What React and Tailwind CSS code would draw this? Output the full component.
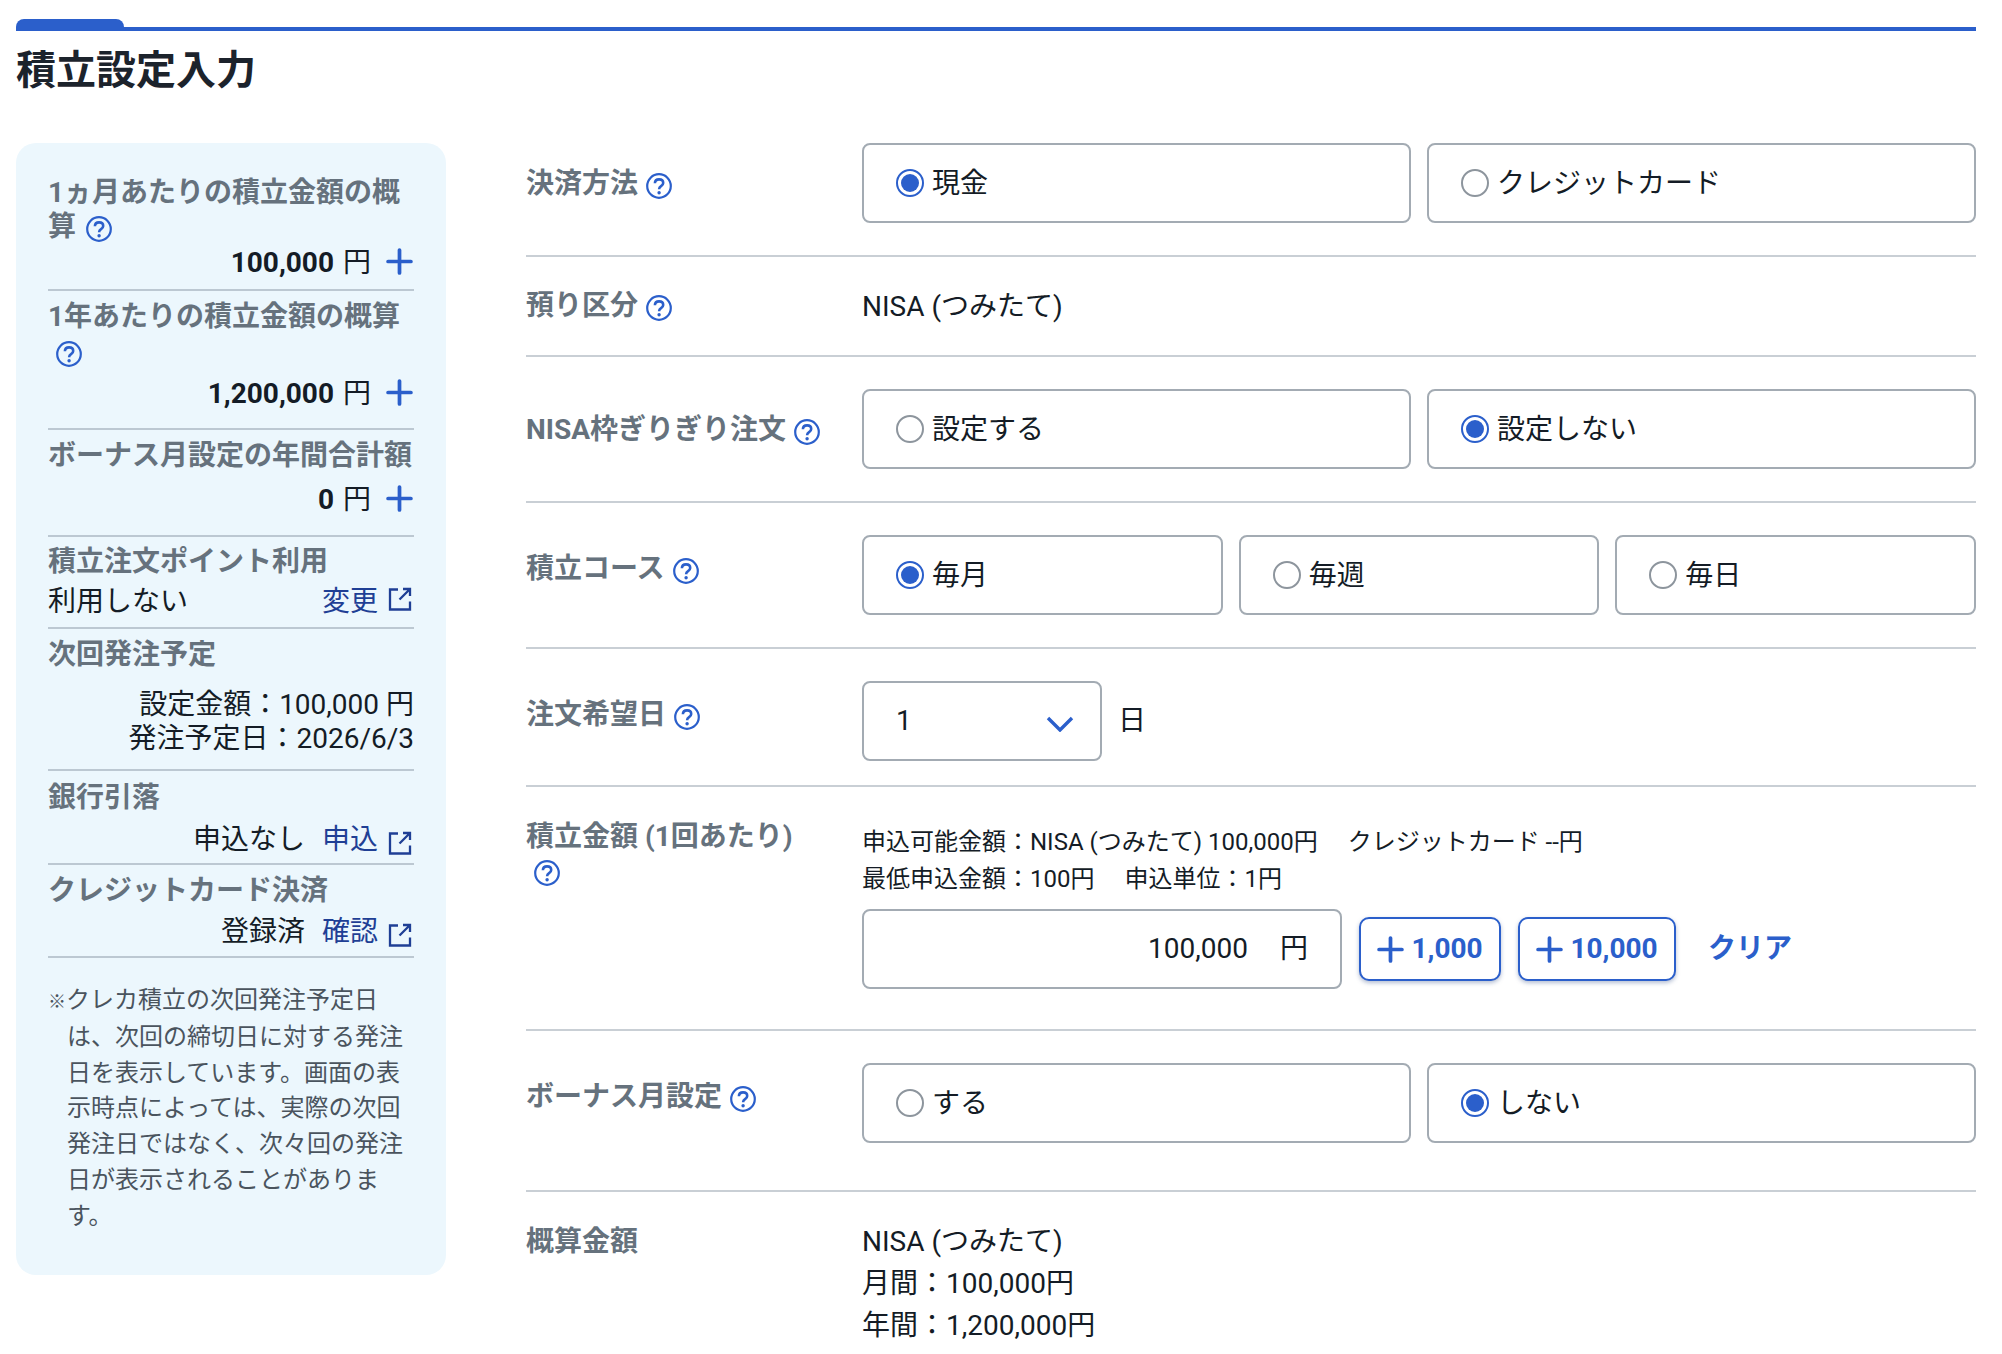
const FONT = "font-['Roboto','Noto_Sans_CJK_JP',sans-serif]";

function Help({ className = '' }) {
  return (
    <svg viewBox="0 0 26 26" className={`inline-block w-[26px] h-[26px] shrink-0 ${className}`} fill="none" stroke="#2b5fcb">
      <circle cx="13" cy="13" r="11.8" strokeWidth="2.2" />
      <path d="M8.9 10.3c0-2.5 1.8-3.9 4.2-3.9 2.4 0 4.1 1.4 4.1 3.5 0 1.6-.9 2.4-2.1 3.2-1.2.8-1.9 1.4-1.9 2.7v.5" strokeWidth="2.6" />
      <circle cx="13.1" cy="19.8" r="1.7" fill="#2b5fcb" stroke="none" />
    </svg>
  );
}

function ExternalLink({ className = '' }) {
  return (
    <svg viewBox="0 0 24 24" className={`w-[24px] h-[24px] shrink-0 ${className}`} fill="none" stroke="#1f3f95" strokeWidth="2.3">
      <path d="M10 2.5H2v20h20v-8M11.5 12.5 22 2M15 2h7v7" />
    </svg>
  );
}

function PlusIcon({ className = '' }) {
  return (
    <svg viewBox="0 0 26 26" className={`w-[27px] h-[27px] shrink-0 ${className}`} stroke="#2b5fcb" strokeWidth="3.6" strokeLinecap="round">
      <path d="M13 2v22M2 13h22" />
    </svg>
  );
}

function SummaryTitle({ children, className = '' }) {
  return <div className={`font-bold text-[#66727d] ${className}`}>{children}</div>;
}

function Amount({ value }) {
  return (
    <div className="flex items-center justify-end pr-[1px]">
      <span className="font-bold text-[#141c26]">{value}</span>
      <span className="ml-[9px]">円</span>
      <PlusIcon className="ml-[15px] -mt-[3px]" />
    </div>
  );
}

function LinkRow({ text, link, between, iconClass = '' }) {
  return (
    <div className={`flex items-center ${between ? 'justify-between' : 'justify-end'}`}>
      <span className={between ? '' : 'mr-[17px]'}>{text}</span>
      <span className="flex items-center pr-[2px] text-[#1f3f95]">
        {link}
        <ExternalLink className={`ml-[10px] ${iconClass}`} />
      </span>
    </div>
  );
}

function Sidebar() {
  return (
    <aside className="w-[430px] shrink-0 rounded-[20px] bg-[#ecf7fd] px-[32px] pt-[33px] pb-[40px] text-[28px] leading-[36px] text-[#141c26]">
      <div className="border-b-2 border-[#bcc8d2] pb-[8px]">
        <SummaryTitle className="leading-[34px]">1ヵ月あたりの積立金額の概<br />算 <Help className="align-[-6px] ml-[3px]" /></SummaryTitle>
        <div className="mt-[1px]"><Amount value="100,000" /></div>
      </div>
      <div className="border-b-2 border-[#bcc8d2] pt-[8px] pb-[16px]">
        <SummaryTitle>1年あたりの積立金額の概算<br /><Help className="align-[-5px] ml-[8px]" /></SummaryTitle>
        <div className="mt-[5px]"><Amount value="1,200,000" /></div>
      </div>
      <div className="border-b-2 border-[#bcc8d2] pt-[8px] pb-[17px]">
        <SummaryTitle>ボーナス月設定の年間合計額</SummaryTitle>
        <div className="mt-[8px]"><Amount value="0" /></div>
      </div>
      <div className="border-b-2 border-[#bcc8d2] pt-[7px] pb-[7px]">
        <SummaryTitle>積立注文ポイント利用</SummaryTitle>
        <div className="mt-[4px]"><LinkRow text="利用しない" link="変更" between iconClass="-mt-[6px]" /></div>
      </div>
      <div className="border-b-2 border-[#bcc8d2] pt-[8px] pb-[13px]">
        <SummaryTitle>次回発注予定</SummaryTitle>
        <div className="mt-[15px] text-right leading-[34px]">
          <div>設定金額：100,000 円</div>
          <div>発注予定日：2026/6/3</div>
        </div>
      </div>
      <div className="border-b-2 border-[#bcc8d2] pt-[9px] pb-[5px]">
        <SummaryTitle>銀行引落</SummaryTitle>
        <div className="mt-[6px]"><LinkRow text="申込なし" link="申込" iconClass="mt-[6px]" /></div>
      </div>
      <div className="border-b-2 border-[#bcc8d2] pt-[8px] pb-[6px]">
        <SummaryTitle>クレジットカード決済</SummaryTitle>
        <div className="mt-[5px]"><LinkRow text="登録済" link="確認" iconClass="mt-[6px]" /></div>
      </div>
      <div className="mt-[25px] pl-[19px] -indent-[19px] text-[24px] leading-[35.8px] text-[#4a545e]">
        <span className="text-[18px]">※</span>クレカ積立の次回発注予定日は、次回の締切日に対する発注日を表示しています。画面の表示時点によっては、実際の次回発注日ではなく、次々回の発注日が表示されることがあります。
      </div>
    </aside>
  );
}

function Radio({ label, checked }) {
  return (
    <div className="flex h-[80px] items-center rounded-[8px] border-2 border-[#a3abb3] bg-white pl-[32px]">
      {checked ? (
        <span className="flex h-[28px] w-[28px] items-center justify-center rounded-full border-2 border-[#2b5fcb]">
          <span className="h-[18px] w-[18px] rounded-full bg-[#2b5fcb]" />
        </span>
      ) : (
        <span className="h-[28px] w-[28px] rounded-full border-2 border-[#8d959d]" />
      )}
      <span className="ml-[8px] pt-[1px]">{label}</span>
    </div>
  );
}

function Row({ label, help = true, children, className = '', labelClass = '' }) {
  return (
    <div className={`flex border-b-2 border-[#c9cfd5] last:border-b-0 ${className}`}>
      <div className={`w-[336px] shrink-0 font-bold text-[#66727d] ${labelClass}`}>
        {label}
        {help && <Help className="ml-[8px] align-[-6px]" />}
      </div>
      <div className="flex-1">{children}</div>
    </div>
  );
}

function AddButton({ label, className = '' }) {
  return (
    <div className={`flex h-[64px] items-center justify-center rounded-[10px] border-2 border-[#2b5fcb] bg-white font-bold text-[#2b5fcb] shadow-[0_2px_4px_rgba(40,70,130,0.35)] ${className}`}>
      <PlusIcon className="mr-[7px]" />
      {label}
    </div>
  );
}

export default function App() {
  return (
    <div className={`${FONT} w-[2002px] h-[1354px] overflow-hidden bg-white pl-[16px] pr-[26px] pt-[19px] text-[28px] leading-[42px] text-[#141c26]`}>
      <div className="h-[12px] border-b-4 border-[#2b5fcb]">
        <div className="h-[8px] w-[108px] rounded-t-[8px] bg-[#2b5fcb]" />
      </div>
      <h1 className="mt-[16px] text-[40px] leading-[48px] font-bold text-[#1c232c]">積立設定入力</h1>

      <div className="mt-[48px] flex items-start">
        <Sidebar />
        <main className="ml-[80px] flex-1">
          <Row label="決済方法" className="pb-[32px]" labelClass="pt-[20px]">
            <div className="grid grid-cols-2 gap-[16px]">
              <Radio label="現金" checked />
              <Radio label="クレジットカード" />
            </div>
          </Row>
          <Row label="預り区分" className="h-[100px] items-center">
            <div className="pt-[2px]">NISA (つみたて)</div>
          </Row>
          <Row label="NISA枠ぎりぎり注文" className="pt-[32px] pb-[32px]" labelClass="pt-[20px]">
            <div className="grid grid-cols-2 gap-[16px]">
              <Radio label="設定する" />
              <Radio label="設定しない" checked />
            </div>
          </Row>
          <Row label="積立コース" className="pt-[32px] pb-[32px]" labelClass="pt-[13px]">
            <div className="grid grid-cols-3 gap-[16px]">
              <Radio label="毎月" checked />
              <Radio label="毎週" />
              <Radio label="毎日" />
            </div>
          </Row>
          <Row label="注文希望日" className="pt-[32px] pb-[24px]" labelClass="pt-[13px]">
            <div className="flex items-center">
              <div className="flex h-[80px] w-[240px] items-center justify-between rounded-[8px] border-2 border-[#a3abb3] pl-[32px] pr-[26px]">
                1
                <svg viewBox="0 0 28 16" className="w-[28px] h-[16px] mt-[6px]" fill="none" stroke="#2b5fcb" strokeWidth="3.4">
                  <path d="M2 2l12 12L26 2" />
                </svg>
              </div>
              <span className="ml-[16px]">日</span>
            </div>
          </Row>
          <Row label="積立金額 (1回あたり)" className="pt-[30px] pb-[40px]" labelClass="pt-[3px] pr-[50px] leading-[34px]">
            <div className="text-[24px] leading-[37px] pt-[7px]">
              <div>申込可能金額：NISA (つみたて) 100,000円　 クレジットカード --円</div>
              <div>最低申込金額：100円　 申込単位：1円</div>
            </div>
            <div className="mt-[11px] flex items-center">
              <div className="flex h-[80px] w-[480px] items-center justify-end rounded-[8px] border-2 border-[#a3abb3] pr-[32px]">
                100,000<span className="ml-[32px]">円</span>
              </div>
              <AddButton label="1,000" className="ml-[17px] w-[142px]" />
              <AddButton label="10,000" className="ml-[17px] w-[158px]" />
              <span className="ml-[32px] font-bold text-[#2b5fcb]">クリア</span>
            </div>
          </Row>
          <Row label="ボーナス月設定" className="pt-[32px] pb-[47px]" labelClass="pt-[13px]">
            <div className="grid grid-cols-2 gap-[16px]">
              <Radio label="する" />
              <Radio label="しない" checked />
            </div>
          </Row>
          <Row label="概算金額" help={false} className="pt-[29px]">
            <div>NISA (つみたて)</div>
            <div>月間：100,000円</div>
            <div>年間：1,200,000円</div>
          </Row>
        </main>
      </div>
    </div>
  );
}
